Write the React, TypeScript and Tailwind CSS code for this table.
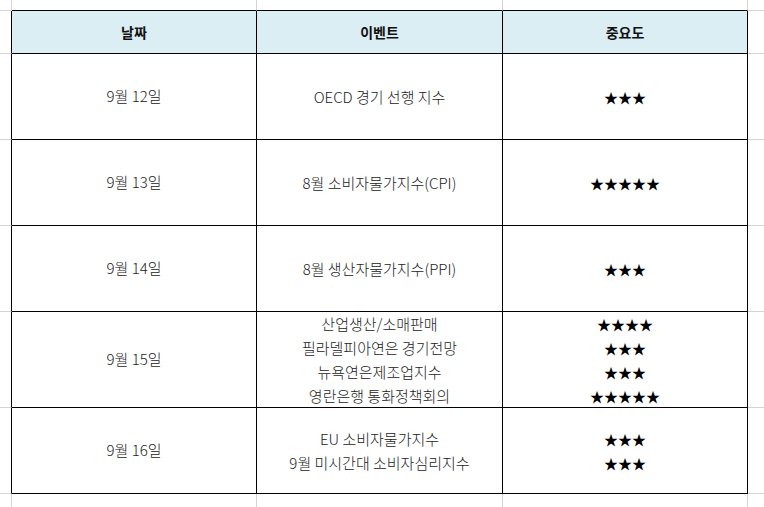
import React from "react";

const font = "font-['Noto_Sans_CJK_KR','Noto_Sans',sans-serif]";

type Row = { h: string; date: string; events: string[]; stars: string[] };

const rows: Row[] = [
  { h: "h-[86px]", date: "9월 12일", events: ["OECD 경기 선행 지수"], stars: ["★★★"] },
  { h: "h-[86px]", date: "9월 13일", events: ["8월 소비자물가지수(CPI)"], stars: ["★★★★★"] },
  { h: "h-[86px]", date: "9월 14일", events: ["8월 생산자물가지수(PPI)"], stars: ["★★★"] },
  {
    h: "h-[96px]",
    date: "9월 15일",
    events: ["산업생산/소매판매", "필라델피아연은 경기전망", "뉴욕연은제조업지수", "영란은행 통화정책회의"],
    stars: ["★★★★", "★★★", "★★★", "★★★★★"],
  },
  {
    h: "h-[86px]",
    date: "9월 16일",
    events: ["EU 소비자물가지수", "9월 미시간대 소비자심리지수"],
    stars: ["★★★", "★★★"],
  },
];

export default function App() {
  return (
    <div className={`w-[764px] h-[507px] bg-white flex flex-col overflow-hidden ${font}`}>
      {/* top spreadsheet row */}
      <div className="flex h-[11px] shrink-0">
        <div className="w-[12px] border-r border-b border-[#d4d4d4]" />
        <div className="w-[245px] border-r border-r-[#d4d4d4] border-b border-b-black" />
        <div className="w-[246px] border-r border-r-[#d4d4d4] border-b border-b-black" />
        <div className="w-[245px] border-r border-r-[#d4d4d4] border-b border-b-black" />
        <div className="flex-1 border-b border-[#d4d4d4]" />
      </div>
      {/* header */}
      <div className="flex h-[43px] shrink-0">
        <div className="w-[12px] border-r border-r-black border-b border-b-[#d4d4d4]" />
        <div className="w-[245px] border-r border-b border-black bg-[#daeef3] flex items-center justify-center text-[14px] font-semibold text-[#111]">
          날짜
        </div>
        <div className="w-[246px] border-r border-b border-black bg-[#daeef3] flex items-center justify-center text-[14px] font-semibold text-[#111]">
          이벤트
        </div>
        <div className="w-[245px] border-r border-b border-black bg-[#daeef3] flex items-center justify-center text-[14px] font-semibold text-[#111]">
          중요도
        </div>
        <div className="flex-1 border-b border-[#d4d4d4]" />
      </div>
      {rows.map((r) => (
        <div key={r.date} className={`flex shrink-0 ${r.h}`}>
          <div className="w-[12px] border-r border-r-black border-b border-b-[#d4d4d4]" />
          <div className="w-[245px] border-r border-b border-black flex items-center justify-center text-[15px] font-light text-[#222]">
            {r.date}
          </div>
          <div className="w-[246px] border-r border-b border-black flex flex-col items-center justify-center text-[15px] leading-[24px] font-light text-[#222]">
            {r.events.map((e) => (
              <div key={e}>{e}</div>
            ))}
          </div>
          <div className="w-[245px] border-r border-b border-black flex flex-col items-center justify-center text-[14px] leading-[24px] text-black">
            {r.stars.map((s, i) => (
              <div key={i}>{s}</div>
            ))}
          </div>
          <div className="flex-1 border-b border-[#d4d4d4]" />
        </div>
      ))}
      {/* bottom spreadsheet row */}
      <div className="flex flex-1">
        <div className="w-[12px] border-r border-[#d4d4d4]" />
        <div className="w-[245px] border-r border-[#d4d4d4]" />
        <div className="w-[246px] border-r border-[#d4d4d4]" />
        <div className="w-[245px] border-r border-[#d4d4d4]" />
        <div className="flex-1" />
      </div>
    </div>
  );
}
